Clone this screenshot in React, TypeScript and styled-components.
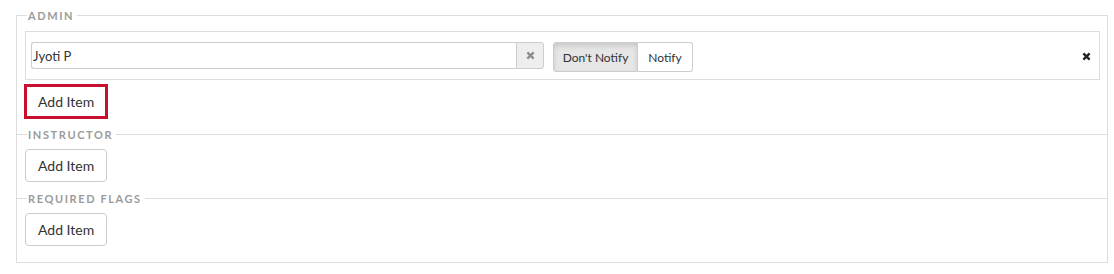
import React from "react";
import styled, { createGlobalStyle } from "styled-components";

const GlobalStyle = createGlobalStyle`
  html, body {
    margin: 0;
    padding: 0;
    background: #fff;
  }
  body {
    font-family: Lato, "Open Sans", "Liberation Sans", sans-serif;
    color: #333;
  }
  * {
    box-sizing: border-box;
  }
`;

type Section = {
  title: string;
  items: { name: string; notify: boolean }[];
  highlight?: boolean;
};

const sections: Section[] = [
  { title: "Admin", items: [{ name: "Jyoti P", notify: false }], highlight: true },
  { title: "Instructor", items: [] },
  { title: "Required Flags", items: [] },
];

const ClearIcon = () => (
  <svg width="9" height="9" viewBox="0 0 10 10">
    <path d="M1.5 1.5 L8.5 8.5 M8.5 1.5 L1.5 8.5" stroke="currentColor" strokeWidth="2.6" />
  </svg>
);

const App = () => {
  return (
    <>
      <GlobalStyle />
      <Page>
        <Panel>
          {sections.map(section => (
            <Group key={section.title}>
              <Header>
                <Legend>{section.title}</Legend>
              </Header>
              {section.items.map(item => (
                <ItemBox key={item.name}>
                  <InputGroup>
                    <NameInput defaultValue={item.name} />
                    <ClearButton type="button">
                      <ClearIcon />
                    </ClearButton>
                  </InputGroup>
                  <Toggle>
                    <ToggleButton type="button" $active={!item.notify}>
                      Don't Notify
                    </ToggleButton>
                    <ToggleButton type="button" $active={item.notify}>
                      Notify
                    </ToggleButton>
                  </Toggle>
                  <RemoveIcon>
                    <ClearIcon />
                  </RemoveIcon>
                </ItemBox>
              ))}
              <AddButton type="button" $highlight={section.highlight}>
                Add Item
              </AddButton>
            </Group>
          ))}
        </Panel>
      </Page>
    </>
  );
};

const Page = styled.div`
  width: 1114px;
  padding: 15px 6px 0 16px;
`;

const Panel = styled.div`
  border: 1px solid #ddd;
  border-top: 0;
  padding-bottom: 7px;
`;

const Group = styled.section`
  display: flex;
  flex-direction: column;
  align-items: flex-start;
  padding: 0 7px 9px 8px;

  &:first-child > header {
    margin-top: -7px;
  }
`;

const Header = styled.header`
  display: flex;
  align-items: center;
  align-self: stretch;
  height: 15px;
  margin: 0 -7px 7px -9px;

  &::before,
  &::after {
    content: "";
    height: 1px;
    background: #ddd;
  }
  &::before {
    flex: 0 0 11px;
  }
  &::after {
    flex: 1;
  }
`;

const Legend = styled.span`
  padding: 0 3px 0 1px;
  font-size: 11px;
  font-weight: 700;
  letter-spacing: 1.6px;
  text-transform: uppercase;
  color: #9b9b9b;
  line-height: 15px;
`;

const ItemBox = styled.div`
  display: flex;
  align-items: flex-start;
  align-self: stretch;
  margin-top: 1px;
  margin-bottom: 5px;
  padding: 10px 8px 7px 5px;
  border: 1px solid #ddd;
`;

const InputGroup = styled.div`
  display: flex;
`;

const NameInput = styled.input`
  width: 485px;
  height: 27px;
  padding: 0 1px;
  border: 1px solid #ccc;
  border-right: 0;
  border-radius: 3px 0 0 3px;
  font-family: inherit;
  font-size: 13px;
  color: #333;
  outline: none;
`;

const ClearButton = styled.button`
  display: flex;
  align-items: center;
  justify-content: center;
  width: 28px;
  height: 27px;
  padding: 0;
  border: 1px solid #ccc;
  border-radius: 0 3px 3px 0;
  background: #eee;
  color: #8c8c8c;
`;

const Toggle = styled.div`
  display: flex;
  margin-left: 9px;
`;

const ToggleButton = styled.button<{ $active?: boolean }>`
  height: 30px;
  padding: 0;
  border: 1px solid #ccc;
  white-space: nowrap;
  font-family: inherit;
  font-size: 12px;
  color: #333;
  background: ${props => (props.$active ? "#e6e6e6" : "#fff")};
  box-shadow: ${props => (props.$active ? "inset 0 3px 5px rgba(0, 0, 0, 0.125)" : "none")};

  &:first-child {
    width: 85px;
    border-radius: 3px 0 0 3px;
  }
  &:last-child {
    width: 55px;
    border-left: 0;
    border-radius: 0 3px 3px 0;
  }
`;

const RemoveIcon = styled.span`
  display: flex;
  margin: 10px 0 0 auto;
  color: #222;
`;

const AddButton = styled.button<{ $highlight?: boolean }>`
  height: 33px;
  padding: 0 12px;
  border: 1px solid #ccc;
  border-radius: ${props => (props.$highlight ? "0" : "4px")};
  background: #fff;
  font-family: inherit;
  font-size: 14px;
  color: #333;
  outline: ${props => (props.$highlight ? "3px solid #c8102e" : "none")};
  outline-offset: -2px;
`;

export default App;
